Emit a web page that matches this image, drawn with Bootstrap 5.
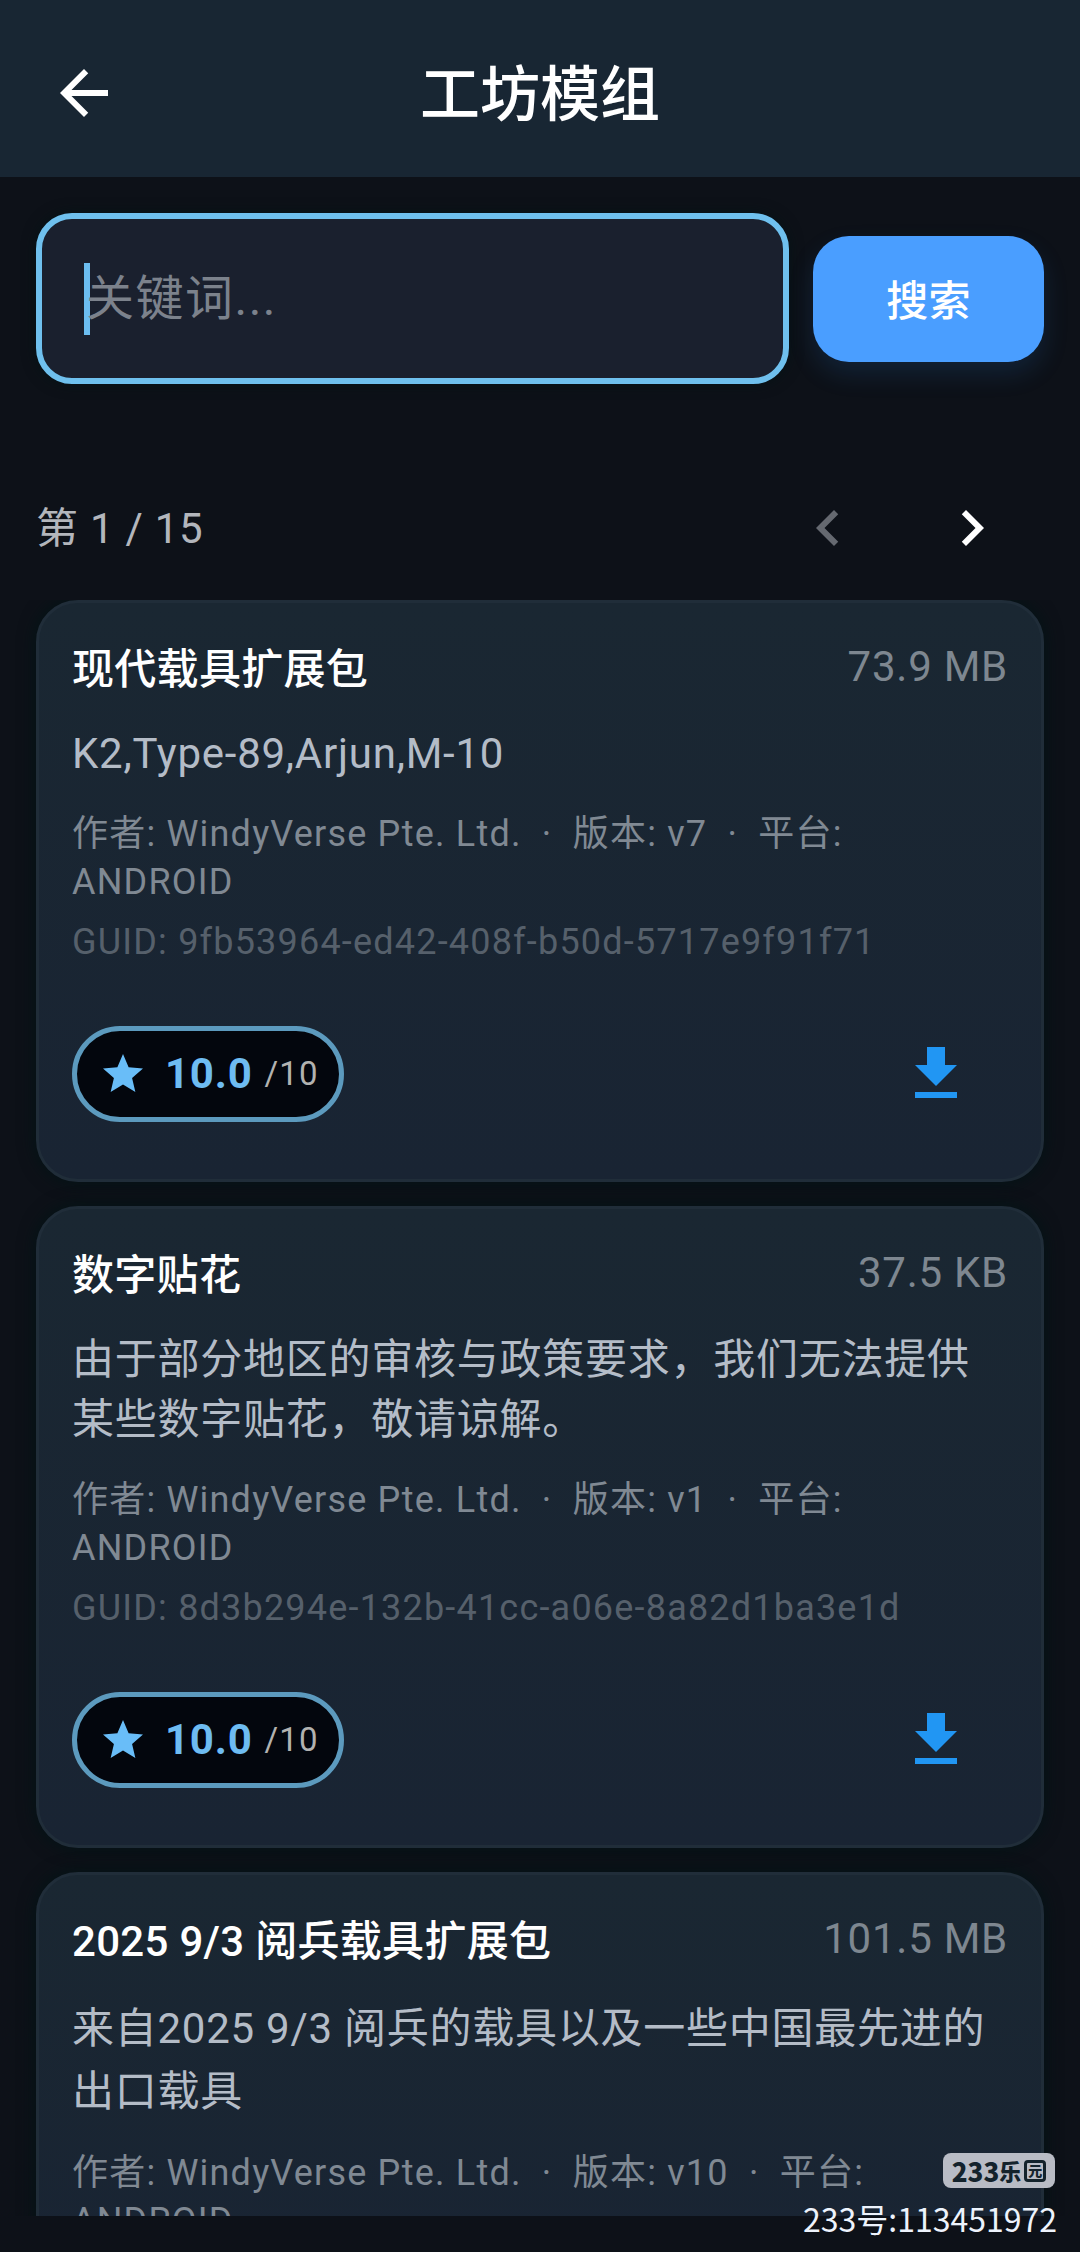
<!DOCTYPE html>
<html lang="zh-CN">
<head>
<meta charset="utf-8">
<meta name="viewport" content="width=device-width, initial-scale=1">
<title>工坊模组</title>
<link href="https://cdn.jsdelivr.net/npm/bootstrap@5.3.0/dist/css/bootstrap.min.css" rel="stylesheet">
<style>
  body { background: #0d1118; color: #fff; font-family: Roboto, "Noto Sans CJK SC", sans-serif; font-size: 42px; letter-spacing: .75px; }
  .screen { width: 1080px; height: 2252px; }
  .icon24 { width: 72px; height: 72px; fill: currentColor; flex: none; }
  .topbar { height: 177px; background: #182633; padding: 9px 48px 0; }
  .topbar h1 { font-size: 60px; font-weight: 500; letter-spacing: 0; line-height: 72px; padding-top: 5px; }
  .side { width: 72px; }
  .search-row { padding: 36px 36px 0; gap: 24px; }
  .keyword { height: 171px; background: #1a202e; border: 6px solid #6fc0ee; border-radius: 36px; padding: 0 42px; box-shadow: 0 0 14px rgba(0,20,22,.7); }
  .caret { width: 6px; height: 72px; background: #6cbdf0; }
  .hint { font-size: 48px; line-height: 72px; letter-spacing: 1.5px; color: #7c828c; margin-left: -4px; }
  .btn-search, .btn-search:hover { width: 231px; height: 126px; border: 0; border-radius: 36px; background: #4a9eff; color: #fff; font-size: 42px; font-weight: 500; letter-spacing: .3px; padding: 6px 0 0; box-shadow: 0 12px 24px rgba(40,110,190,.18); }
  .pager { height: 144px; margin-top: 72px; padding: 0 36px; color: #b3b6bc; }
  .pager-btn { width: 144px; height: 144px; }
  .mods { height: 1616px; padding: 0 36px; gap: 24px; }
  .mod { flex: none; background: linear-gradient(180deg, #1a2732, #192433); border: 3px solid #202d39; border-radius: 42px; padding: 37px 33px 33px; box-shadow: 0 0 16px 2px rgba(0,20,22,.75); }
  .mod-title { font-size: 42px; font-weight: 500; letter-spacing: .3px; line-height: 60px; }
  .mod-size { line-height: 54px; color: #7e8790; }
  .mod-desc { margin-top: 24px; line-height: 60px; color: #b4bcc7; }
  .mod-desc.tall { line-height: 63px; margin-top: 25px; }
  .mod-meta { margin-top: 26px; font-size: 36px; line-height: 48px; letter-spacing: 1.2px; color: #808993; white-space: pre-wrap; }
  .mod-guid { margin-top: 12px; font-size: 36px; line-height: 48px; letter-spacing: 1.2px; color: #56606b; }
  .mod-foot { height: 144px; margin-top: 36px; padding-right: 36px; }
  .score { width: 272px; height: 96px; border: 5px solid #5c9abe; border-radius: 48px; background: #03060d; padding-left: 22px; }
  .score svg { width: 48px; height: 48px; fill: #69bdf8; }
  .score-num { font-weight: 700; color: #6ebcf2; margin-left: 18px; line-height: 54px; }
  .score-max { font-size: 33px; color: #b2b2b0; margin-left: 12px; line-height: 54px; letter-spacing: 1.2px; }
  .dl { color: #2196f3; }
  .wm { position: absolute; right: 23px; top: 2153px; }
  .wm-logo { width: 112px; height: 35px; border-radius: 8px; background: #b9bcc5; color: #14232c; margin-right: 2px; font: 900 26px/35px "Noto Sans CJK SC", sans-serif; letter-spacing: 0; }
  .wm-logo .cn { font-size: 22px; }
  .wm-logo .framed { width: 22px; height: 22px; border: 3px solid #14232c; border-radius: 4px; font-size: 14px; line-height: 15px; margin-left: 3px; }
  .wm-id { font: 400 32px/44px "Noto Sans CJK SC", sans-serif; letter-spacing: 0; color: #edf3fc; margin-top: 8px; }
</style>
</head>
<body>
<svg class="d-none" xmlns="http://www.w3.org/2000/svg">
  <symbol id="i-star" viewBox="0 0 24 24"><path d="M12 17.27 18.18 21l-1.64-7.03L22 9.24l-7.19-.61L12 2 9.19 8.63 2 9.24l5.46 4.73L5.82 21z"/></symbol>
  <symbol id="i-dl" viewBox="0 0 24 24"><path d="M19 9h-4V3H9v6H5l7 7 7-7zM5 18v2h14v-2H5z"/></symbol>
</svg>
<div class="screen position-relative overflow-hidden d-flex flex-column">
  <header class="topbar d-flex align-items-center justify-content-between">
    <svg class="icon24" viewBox="0 0 24 24"><path d="M20 11H7.83l5.59-5.59L12 4l-8 8 8 8 1.41-1.41L7.83 13H20v-2z"/></svg>
    <h1 class="m-0">工坊模组</h1>
    <div class="side"></div>
  </header>

  <div class="search-row d-flex align-items-center">
    <div class="keyword flex-grow-1 d-flex align-items-center"><span class="caret"></span><span class="hint">关键词...</span></div>
    <button class="btn btn-primary btn-search" type="button">搜索</button>
  </div>

  <nav class="pager d-flex align-items-center">
    <span class="me-auto">第 1 / 15</span>
    <span class="pager-btn d-flex align-items-center justify-content-center" style="color:#656970"><svg class="icon24" viewBox="0 0 24 24"><path d="M15.41 7.41 14 6l-6 6 6 6 1.41-1.41L10.83 12z"/></svg></span>
    <span class="pager-btn d-flex align-items-center justify-content-center text-white"><svg class="icon24" viewBox="0 0 24 24"><path d="M10 6 8.59 7.41 13.17 12l-4.58 4.59L10 18l6-6z"/></svg></span>
  </nav>

  <main class="mods d-flex flex-column overflow-hidden">
    <article class="mod">
      <div class="d-flex justify-content-between"><div class="mod-title">现代载具扩展包</div><div class="mod-size">73.9 MB</div></div>
      <div class="mod-desc">K2,Type-89,Arjun,M-10</div>
      <div class="mod-meta">作者: WindyVerse Pte. Ltd.  ·  版本: v7  ·  平台: ANDROID</div>
      <div class="mod-guid">GUID: 9fb53964-ed42-408f-b50d-5717e9f91f71</div>
      <div class="mod-foot d-flex align-items-center justify-content-between">
        <div class="score d-flex align-items-center"><svg><use href="#i-star"/></svg><span class="score-num">10.0</span><span class="score-max">/10</span></div>
        <svg class="icon24 dl"><use href="#i-dl"/></svg>
      </div>
    </article>
    <article class="mod">
      <div class="d-flex justify-content-between"><div class="mod-title">数字贴花</div><div class="mod-size">37.5 KB</div></div>
      <div class="mod-desc">由于部分地区的审核与政策要求，我们无法提供某些数字贴花，敬请谅解。</div>
      <div class="mod-meta">作者: WindyVerse Pte. Ltd.  ·  版本: v1  ·  平台: ANDROID</div>
      <div class="mod-guid">GUID: 8d3b294e-132b-41cc-a06e-8a82d1ba3e1d</div>
      <div class="mod-foot d-flex align-items-center justify-content-between">
        <div class="score d-flex align-items-center"><svg><use href="#i-star"/></svg><span class="score-num">10.0</span><span class="score-max">/10</span></div>
        <svg class="icon24 dl"><use href="#i-dl"/></svg>
      </div>
    </article>
    <article class="mod">
      <div class="d-flex justify-content-between"><div class="mod-title">2025 9/3 阅兵载具扩展包</div><div class="mod-size">101.5 MB</div></div>
      <div class="mod-desc tall">来自2025 9/3 阅兵的载具以及一些中国最先进的出口载具</div>
      <div class="mod-meta">作者: WindyVerse Pte. Ltd.  ·  版本: v10  ·  平台: ANDROID</div>
    </article>
  </main>

  <div class="wm d-flex flex-column align-items-end">
    <div class="wm-logo d-flex align-items-center justify-content-center">233<span class="cn">乐</span><span class="framed d-flex align-items-center justify-content-center">元</span></div>
    <div class="wm-id">233号:113451972</div>
  </div>
</div>
<script src="https://cdn.jsdelivr.net/npm/bootstrap@5.3.0/dist/js/bootstrap.bundle.min.js"></script>
</body>
</html>
